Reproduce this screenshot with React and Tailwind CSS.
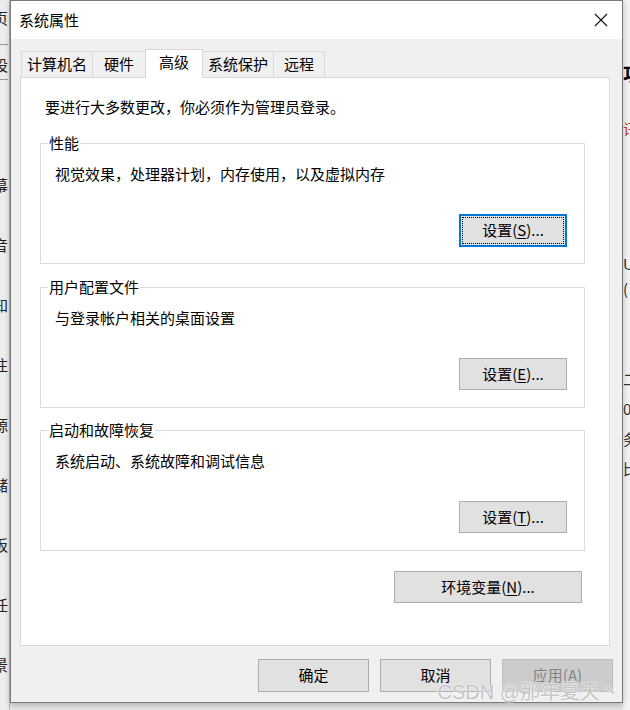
const font = "font-['Microsoft_YaHei_UI','Noto_Sans_CJK_SC',sans-serif]"

function Btn({ children, w = 'w-[108px]', h = 'h-[32px]', focused, disabled }) {
  if (focused) {
    return (
      <div className={`${w} ${h} border-2 border-[#0078d7] bg-[#e1e1e1] p-[1px]`}>
        <div className="w-full h-full border border-dotted border-black flex items-center justify-center text-[15px] text-black">
          {children}
        </div>
      </div>
    )
  }
  return (
    <div
      className={`${w} ${h} border flex items-center justify-center text-[15px] ${
        disabled ? 'bg-[#cccccc] border-[#bfbfbf] text-[#838383]' : 'bg-[#e1e1e1] border-[#adadad] text-black'
      }`}
    >
      {children}
    </div>
  )
}

function Group({ title, text, children, className = '' }) {
  return (
    <div className={`relative ml-[19px] w-[545px] h-[121px] border border-[#dcdcdc] ${className}`}>
      <span className="absolute left-[7px] -top-[11px] bg-white px-[1px] leading-[20px]">{title}</span>
      <div className="pl-[14px] pt-[20px] leading-[20px]">{text}</div>
      <div className="flex justify-end pr-[17px] mt-[30px]">{children}</div>
    </div>
  )
}

const leftChars = ['页', '设', '幕', '音', '知', '注', '源', '储', '板', '任', '景']

export default function App() {
  return (
    <div className={`w-[630px] h-[710px] flex bg-[#e6e6e6] overflow-hidden text-[15px] text-black ${font}`}>

      {/* background, left edge */}
      <div className="w-[10px] shrink-0 h-full bg-[#ececec] border-r border-[#b5b5b5] overflow-hidden relative">
        <div className="absolute right-[1px] top-[8px] flex flex-col items-end text-[#222] leading-[20px]">
          <div className="h-[36px]">页</div>
          <div className="h-[36px] pt-[10px] border-y border-[#9a9a9a] w-[40px] text-right">设</div>
          {leftChars.slice(2).map((c, i) => (
            <div key={i} className={i === 0 ? 'h-[60px] mt-[95px]' : 'h-[60px]'}>{c}</div>
          ))}
        </div>
      </div>

      {/* dialog window */}
      <div className="w-[613px] shrink-0 h-[703px] border border-[#7a7a7a] bg-[#f0f0f0] flex flex-col shadow-[0_2px_6px_rgba(0,0,0,0.25)] relative">

        {/* title bar */}
        <div className="h-[38px] bg-white flex items-center justify-between pl-[8px] pr-[12px]">
          <span className="leading-[20px]">系统属性</span>
          <svg width="14" height="14" viewBox="0 0 14 14" className="mr-[2px]">
            <path d="M1 1 L13 13 M13 1 L1 13" stroke="#111" strokeWidth="1.1" fill="none" />
          </svg>
        </div>

        {/* body */}
        <div className="flex-1 pt-[10px] pl-[9px] pr-[9px]">

          {/* tabs */}
          <div className="flex items-end pl-[1px] h-[28px]">
            <div className="w-[72px] h-[26px] border border-b-0 border-[#d9d9d9] bg-[#f0f0f0] flex items-center justify-center">计算机名</div>
            <div className="-ml-px w-[54px] h-[26px] border border-b-0 border-[#d9d9d9] bg-[#f0f0f0] flex items-center justify-center">硬件</div>
            <div className="-ml-px w-[58px] h-[29px] -mb-px relative z-10 border border-b-0 border-[#d9d9d9] bg-white flex items-start justify-center pt-[1px]">高级</div>
            <div className="-ml-px w-[72px] h-[26px] border border-b-0 border-[#d9d9d9] bg-[#f0f0f0] flex items-center justify-center">系统保护</div>
            <div className="-ml-px w-[52px] h-[26px] border border-b-0 border-[#d9d9d9] bg-[#f0f0f0] flex items-center justify-center">远程</div>
          </div>

          {/* panel */}
          <div className="w-[590px] h-[569px] bg-white border border-[#d9d9d9] flex flex-col">
            <div className="pl-[24px] pt-[19px] leading-[20px]">要进行大多数更改，你必须作为管理员登录。</div>

            <Group title="性能" text="视觉效果，处理器计划，内存使用，以及虚拟内存" className="mt-[26px]">
              <Btn focused h="h-[33px]">设置(<span className="underline underline-offset-2">S</span>)...</Btn>
            </Group>

            <Group title="用户配置文件" text="与登录帐户相关的桌面设置" className="mt-[23px]">
              <Btn>设置(<span className="underline underline-offset-2">E</span>)...</Btn>
            </Group>

            <Group title="启动和故障恢复" text="系统启动、系统故障和调试信息" className="mt-[22px]">
              <Btn>设置(<span className="underline underline-offset-2">T</span>)...</Btn>
            </Group>

            <div className="flex justify-end pr-[27px] mt-[20px]">
              <Btn w="w-[188px]">环境变量(<span className="underline underline-offset-2">N</span>)...</Btn>
            </div>
          </div>

          {/* dialog buttons */}
          <div className="flex justify-end gap-[11px] mt-[13px]">
            <Btn w="w-[111px]" h="h-[33px]">确定</Btn>
            <Btn w="w-[111px]" h="h-[33px]">取消</Btn>
            <Btn w="w-[111px]" h="h-[33px]" disabled>应用(A)</Btn>
          </div>
        </div>

        {/* watermark */}
        <div className="absolute right-[2px] bottom-[-2px] text-[20px] leading-[24px] text-[#c4c4c4] [text-shadow:0_0_2px_#ffffff,0_0_1px_#ffffff] font-['Liberation_Sans','Noto_Sans_CJK_SC',sans-serif]">
          CSDN @那年夏天丶
        </div>
      </div>

      {/* background, right edge */}
      <div className="flex-1 h-full bg-[#f3f3f3] overflow-hidden">
        <div className="flex flex-col leading-[20px] text-[#333] w-[40px]">
          <div className="mt-[64px] text-[20px] font-bold text-black">功</div>
          <div className="mt-[35px] text-[#c0392b]">讯</div>
          <div className="mt-[115px]">U</div>
          <div className="mt-[5px]">(</div>
          <div className="mt-[70px]">二</div>
          <div className="mt-[10px]">0-</div>
          <div className="mt-[10px]">务</div>
          <div className="mt-[10px]">比</div>
        </div>
      </div>
    </div>
  )
}
